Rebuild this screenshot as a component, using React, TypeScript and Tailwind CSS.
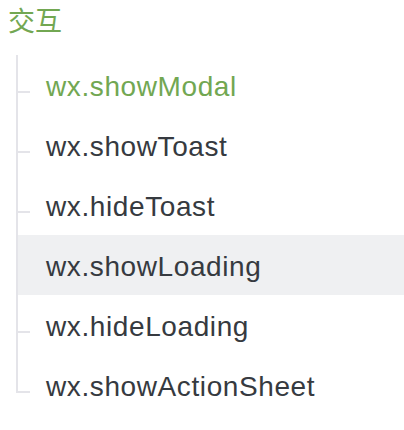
import React from "react";

const items = [
  "wx.showModal",
  "wx.showToast",
  "wx.hideToast",
  "wx.showLoading",
  "wx.hideLoading",
  "wx.showActionSheet",
];

export default function App() {
  return (
    <div className="w-[404px] h-[430px] bg-white font-['Liberation_Sans','Noto_Sans_CJK_SC',sans-serif]">
      <div className="pl-2 pt-[6px] text-[27px] leading-[28px] text-[#72a752] font-['Noto_Sans_CJK_SC',sans-serif]">
        交互
      </div>
      <ul className="mt-[21px] ml-4">
        {items.map((it, i) => {
          const last = i === items.length - 1;
          const active = i === 0;
          const hover = i === 3;
          return (
            <li key={it} className="flex h-[60px]">
              <div
                className={`w-[2px] bg-[#e4e4e9] ${last ? "h-[38px]" : "h-full"}`}
              />
              <div className={`relative flex-1 ${hover ? "bg-[#eff0f2]" : ""}`}>
                {!hover && (
                  <span className="absolute left-0 top-[36px] w-3 h-[2px] bg-[#e4e4e9]" />
                )}
                <div
                  className={`pl-[28px] pt-[3px] leading-[57px] text-[28px] tracking-[0.6px] ${
                    active ? "text-[#72a752]" : "text-[#363a40]"
                  }`}
                >
                  {it}
                </div>
              </div>
            </li>
          );
        })}
      </ul>
    </div>
  );
}
